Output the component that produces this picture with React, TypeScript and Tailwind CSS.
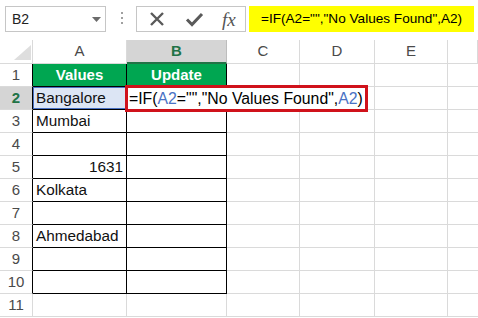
import React from 'react';

const font = "font-['Liberation_Sans',Arial,sans-serif]";

const colHeads = ['A', 'B', 'C', 'D', 'E', ''];
const colA = ['Values', 'Bangalore', 'Mumbai', '', '1631', 'Kolkata', '', 'Ahmedabad', '', '', ''];

const TopBar: React.FC = () => (
  <div className="flex items-start h-[40px] pt-[6px] pl-[5px]">
    {/* name box */}
    <div className="relative w-[101px] h-[26px] border border-[#c6c6c6] flex items-center pl-[6px] text-[14px] text-[#222]">
      B2
      <svg className="absolute right-[4px] top-[10px]" width="9" height="5" viewBox="0 0 9 5">
        <path d="M0 0 H9 L4.5 5 Z" fill="#6b6b6b" />
      </svg>
    </div>
    {/* grip dots */}
    <div className="ml-[15px] mt-[6px] flex flex-col gap-[3px]">
      <span className="w-[2px] h-[2px] bg-[#a0a0a0]" />
      <span className="w-[2px] h-[2px] bg-[#a0a0a0]" />
      <span className="w-[2px] h-[2px] bg-[#a0a0a0]" />
    </div>
    {/* cancel / enter / fx */}
    <div className="ml-[13px] w-[110px] h-[26px] border border-[#c6c6c6] flex items-center">
      <svg className="ml-[12px]" width="16" height="16" viewBox="0 0 16 16">
        <path d="M2 2 L14 14 M14 2 L2 14" stroke="#5a5a5a" strokeWidth="2.4" />
      </svg>
      <svg className="ml-[20px]" width="19" height="16" viewBox="0 0 19 16">
        <path d="M2 8.5 L7 13.5 L17 3" stroke="#5a5a5a" strokeWidth="3" fill="none" />
      </svg>
      <span className="ml-[18px] font-['Liberation_Serif',serif] italic text-[19px] leading-none text-[#555]">
        fx
      </span>
    </div>
    {/* formula */}
    <div className="ml-[3px] w-[225px] h-[26px] bg-[#ffff00] flex items-center pl-[12px] text-[13.6px] text-black whitespace-nowrap">
      =IF(A2="","No Values Found",A2)
    </div>
  </div>
);

const App: React.FC = () => {
  const rows = Array.from({ length: 11 }, (_, i) => i + 1);
  return (
    <div className={`relative w-[478px] h-[318px] bg-white overflow-hidden ${font}`}>
      <TopBar />
      <div className="grid grid-cols-[33px_94px_100px_73px_75px_73px_1fr] grid-rows-[24px_repeat(11,23px)]">
        {/* header row */}
        <div className="border-r border-b border-[#dadada] flex items-end justify-end pr-[1px] pb-[3px]">
          <svg width="17" height="15" viewBox="0 0 17 15">
            <path d="M17 0 V15 H0 Z" fill="#dedede" />
          </svg>
        </div>
        {colHeads.map((c) =>
          c === 'B' ? (
            <div
              key={c}
              className="bg-[#d5d5d5] border-r border-[#bdbdbd] border-b-2 border-b-[#217346] flex items-center justify-center text-[15px] font-bold text-[#217346]"
            >
              B
            </div>
          ) : (
            <div
              key={c || 'F'}
              className="border-r border-b border-[#dadada] flex items-center justify-center text-[15px] text-[#4a4a4a]"
            >
              {c}
            </div>
          )
        )}

        {rows.map((r) => {
          const inTable = r <= 10;
          const a = colA[r - 1];
          return (
            <React.Fragment key={r}>
              <div
                className={`border-b border-[#dadada] border-r flex items-center justify-center text-[15px] ${
                  inTable ? 'border-r-black' : ''
                } ${r === 2 ? 'bg-[#d5d5d5] font-bold text-[#217346]' : 'text-[#4a4a4a]'}`}
              >
                {r}
              </div>
              {r === 1 ? (
                <>
                  <div className="bg-[#00a651] border-r border-b border-black flex items-center justify-center text-[15px] font-bold text-white">
                    Values
                  </div>
                  <div className="bg-[#00a651] border-r border-b border-black flex items-center justify-center text-[15px] font-bold text-white">
                    Update
                  </div>
                </>
              ) : (
                <>
                  <div
                    className={`border-r border-b flex items-center text-[15.3px] text-[#111] ${
                      inTable ? 'border-black' : 'border-[#dadada]'
                    } ${a === '1631' ? 'justify-end pr-[3px]' : 'pl-[3px]'} ${
                      r === 2 ? 'bg-[#dce5f4] shadow-[inset_0_0_0_1px_#4a72c4]' : ''
                    }`}
                  >
                    {a}
                  </div>
                  <div className={`border-r border-b ${inTable ? 'border-black' : 'border-[#dadada]'}`} />
                </>
              )}
              <div className="border-r border-b border-[#dadada]" />
              <div className="border-r border-b border-[#dadada]" />
              <div className="border-r border-b border-[#dadada]" />
              <div className="border-b border-[#dadada]" />
            </React.Fragment>
          );
        })}
      </div>

      {/* active cell formula, overflowing into C2:D2 */}
      <div className="absolute left-[125px] top-[85px] w-[243px] h-[27px] border-[3px] border-[#d0121b] bg-white flex items-center pl-[1px] text-[15.8px] text-black whitespace-nowrap">
        =IF(<span className="text-[#4a72c4]">A2</span>="","No Values Found",
        <span className="text-[#4a72c4]">A2</span>)
      </div>
    </div>
  );
};

export default App;
